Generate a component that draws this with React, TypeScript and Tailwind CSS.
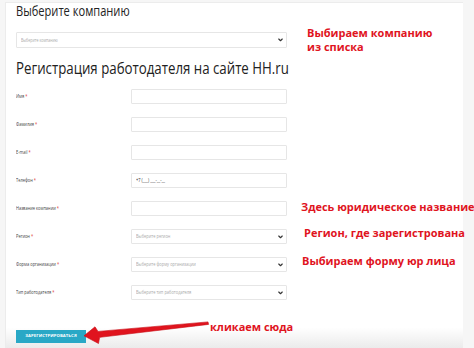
import React from "react";

const font = { fontFamily: '"Open Sans", "Noto Sans", sans-serif' } as const;

function Chevron() {
  return (
    <svg width="5" height="4" viewBox="0 0 10 7" className="shrink-0">
      <path d="M1.5 1.5 L5 5 L8.5 1.5" fill="none" stroke="#333" strokeWidth="2.2" strokeLinecap="round" strokeLinejoin="round" />
    </svg>
  );
}

function Field({ label, placeholder, select }: { label: string; placeholder?: string; select?: boolean }) {
  const phone = placeholder ? placeholder.startsWith("+7") : false;
  return (
    <div className="flex items-center h-[15px]">
      <div className="w-[115px] h-[15px] flex items-center text-[5px] leading-none">
        <span className="block origin-left scale-x-[0.8] text-[#444] whitespace-nowrap">
          {label} <span className="text-[#e03030]">*</span>
        </span>
      </div>
      <div className="w-[156px] h-[15px] border border-[#e6e6e6] bg-white rounded-[1px] flex items-center justify-between pl-[4px] pr-[3px] text-[5px] leading-none">
        <span className={`block origin-left scale-x-[0.8] whitespace-nowrap ${phone ? "text-[#333]" : "text-[#aaa]"}`}>
          {placeholder ?? ""}
        </span>
        {select ? <Chevron /> : null}
      </div>
    </div>
  );
}

export default function App() {
  return (
    <div className="relative w-[474px] h-[348px] overflow-hidden bg-[#f6f6f6]" style={font}>
      <div className="ml-[5px] mt-[2px] w-[458px] h-[346px] bg-[linear-gradient(to_bottom,#ffffff_0%,#ffffff_94%,#ebebeb_100%)] border-l border-t border-[#ececec] pl-[10px] flex flex-col">
        <div className="h-[15px] flex items-center text-[15px] leading-none whitespace-nowrap">
          <span className="block origin-left scale-x-[0.74] text-[#222]">Выберите компанию</span>
        </div>
        <div className="mt-[14px] w-[271px] h-[16px] border border-[#e6e6e6] rounded-[1px] flex items-center justify-between pl-[4px] pr-[3px] text-[4.5px] leading-none">
          <span className="block origin-left scale-x-[0.8] text-[#aaa] whitespace-nowrap">Выберите компанию</span>
          <Chevron />
        </div>
        <div className="mt-[11px] h-[17px] flex items-center text-[17px] leading-none whitespace-nowrap">
          <span className="block origin-left scale-x-[0.78] text-[#222]">Регистрация работодателя на сайте HH.ru</span>
        </div>
        <div className="mt-[13px] flex flex-col gap-[13px]">
          <Field label="Имя" />
          <Field label="Фамилия" />
          <Field label="E-mail" />
          <Field label="Телефон" placeholder="+7 (___) ___-__-__" />
          <Field label="Название компании" />
          <Field label="Регион" placeholder="Выберите регион" select />
          <Field label="Форма организации" placeholder="Выберите форму организации" select />
          <Field label="Тип работодателя" placeholder="Выберите тип работодателя" select />
        </div>
        <div className="mt-[30px] w-[70px] h-[13px] bg-[#29a8c6] flex items-center justify-center">
          <span className="text-[4.2px] font-bold text-white leading-none tracking-[0.1px]">ЗАРЕГИСТРИРОВАТЬСЯ</span>
        </div>
      </div>

      {/* annotations */}
      <div className="absolute left-[307px] top-[26px] text-[11px] font-bold leading-[13.5px] text-[#e0141e] whitespace-nowrap">
        <div>Выбираем компанию</div>
        <div>из списка</div>
      </div>
      <div className="absolute left-[301px] top-[201px] text-[11px] font-bold leading-none text-[#e0141e] whitespace-nowrap">Здесь юридическое название</div>
      <div className="absolute left-[304px] top-[227px] text-[11px] font-bold leading-none text-[#e0141e] whitespace-nowrap">Регион, где зарегистрована</div>
      <div className="absolute left-[302px] top-[255px] text-[11px] font-bold leading-none text-[#e0141e] whitespace-nowrap">Выбираем форму юр лица</div>
      <div className="absolute left-[210px] top-[321px] text-[11px] font-bold leading-none text-[#e0141e] whitespace-nowrap">кликаем сюда</div>

      <svg className="absolute left-0 top-0 pointer-events-none" width="474" height="348" viewBox="0 0 474 348">
        <path
          d="M208 321.9 L208.6 324.4 L100 337.3 L99.5 338 L98.5 343.5 L84 335.8 L95 326.8 L98 331.4 Z"
          fill="#e0141e"
          stroke="#c80e16"
          strokeWidth="0.6"
          strokeLinejoin="round"
        />
      </svg>
    </div>
  );
}
